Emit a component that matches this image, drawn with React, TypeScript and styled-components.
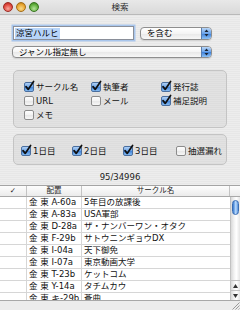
import React from 'react';
import styled, { createGlobalStyle } from 'styled-components';

const FONT = `"DejaVu Sans", "Noto Sans CJK JP", sans-serif`;

const GlobalStyle = createGlobalStyle`
  html, body { margin: 0; padding: 0; }
  body { width: 240px; height: 310px; overflow: hidden; background: #e9e9e9; }
  * { box-sizing: border-box; }
`;

const Window = styled.div`
  width: 240px;
  height: 310px;
  display: flex;
  flex-direction: column;
  background: repeating-linear-gradient(180deg, #ededed 0px, #ededed 1px, #e7e7e7 1px, #e7e7e7 2px);
  font-family: ${FONT};
  color: #000;
  overflow: hidden;
`;

const TitleBar = styled.div`
  flex: none;
  height: 15px;
  display: grid;
  grid-template-columns: 1fr auto 1fr;
  align-items: center;
  background: linear-gradient(#e8e8e8, #d9d9d9);
  border-bottom: 1px solid #b9b9b9;
`;

const Lights = styled.div`
  display: flex;
  gap: 3px;
  padding-left: 3px;
`;

const Light = styled.span<{ $c: string; $d: string; $h: string }>`
  width: 10px;
  height: 10px;
  border-radius: 50%;
  border: 1px solid ${(p) => p.$d};
  background: radial-gradient(circle at 50% 70%, ${(p) => p.$h} 0%, ${(p) => p.$c} 60%, ${(p) => p.$d} 100%);
`;

const Title = styled.div`
  font-size: 8.5px;
  color: #2a2a2a;
  line-height: 14px;
`;

const Form = styled.div`
  flex: none;
  padding: 10px 0 0 12px;
  display: flex;
  flex-direction: column;
  gap: 5px;
`;

const FieldRow = styled.div`
  display: flex;
  align-items: center;
  gap: 5px;
  height: 16px;
`;

const TextField = styled.div`
  width: 121px;
  height: 14px;
  margin: 1px;
  border: 1px solid #8a8f99;
  background: #fff;
  box-shadow: 0 0 0 1.5px #a9c6ec;
  display: flex;
  align-items: center;
  padding-left: 1px;
`;

const Selection = styled.span`
  background: #b7d4f8;
  font-size: 8.5px;
  line-height: 11px;
  padding: 0 1px;
`;

const Popup = styled.div<{ $w: number; $h: number }>`
  width: ${(p) => p.$w}px;
  height: ${(p) => p.$h}px;
  display: flex;
  border: 1px solid #8e8e8e;
  border-radius: 4px;
  overflow: hidden;
  background: linear-gradient(#ffffff, #f4f4f4 50%, #e8e8e8 51%, #f7f7f7);
  box-shadow: 0 1px 1px rgba(0, 0, 0, 0.12);
`;

const PopupLabel = styled.span`
  flex: 1;
  padding-left: 6px;
  font-size: 8.5px;
  line-height: 11px;
  white-space: nowrap;
`;

const Stepper = styled.span`
  width: 10px;
  display: flex;
  align-items: center;
  justify-content: center;
  border-left: 1px solid #5a7eae;
  background: linear-gradient(#b8d6f8, #6aa3ea 50%, #3d7fd8 51%, #8cc2f7);
`;

const GroupBox = styled.div<{ $cols: string; $h: number; $pad: string; $mt: number }>`
  flex: none;
  margin: ${(p) => p.$mt}px 0 0 13px;
  width: 214px;
  height: ${(p) => p.$h}px;
  border: 1px solid #c4c4c4;
  border-radius: 5px;
  background: rgba(0, 0, 0, 0.045);
  display: grid;
  grid-template-columns: ${(p) => p.$cols};
  grid-auto-rows: 14px;
  padding: ${(p) => p.$pad};
`;

const CheckItem = styled.label`
  display: flex;
  align-items: center;
  gap: 2px;
  font-size: 8.5px;
  line-height: 14px;
  white-space: nowrap;
  color: #111;
`;

const Count = styled.div`
  flex: none;
  height: 20px;
  padding-top: 3px;
  display: flex;
  justify-content: center;
  align-items: center;
  font-size: 8.5px;
  color: #222;
`;

const Table = styled.div`
  flex: none;
  height: 115px;
  display: flex;
  flex-direction: column;
  background: #fff;
  border-top: 1px solid #a4a4a4;
`;

const HeaderRow = styled.div`
  flex: none;
  height: 11px;
  display: grid;
  grid-template-columns: 27px 55px 148px 10px;
  background: linear-gradient(#fdfdfd, #ebebeb);
  border-bottom: 1px solid #a9a9a9;
`;

const HeaderCell = styled.div<{ $last?: boolean }>`
  border-right: ${(p) => (p.$last ? 'none' : '1px solid #c3c3c3')};
  font-size: 7.5px;
  line-height: 10px;
  text-align: center;
  color: #222;
`;

const TableBody = styled.div`
  flex: 1;
  display: flex;
  overflow: hidden;
`;

const Rows = styled.div`
  flex: 1;
  overflow: hidden;
`;

const DataRow = styled.div`
  height: 12px;
  display: grid;
  grid-template-columns: 27px 55px 1fr;
  border-bottom: 1px solid #d6d6d6;
`;

const Cell = styled.div<{ $border?: boolean }>`
  border-right: ${(p) => (p.$border ? '1px solid #d6d6d6' : 'none')};
  font-size: 8.5px;
  line-height: 11px;
  padding-left: 2px;
  white-space: nowrap;
  overflow: hidden;
  color: #111;
`;

const Scrollbar = styled.div`
  width: 10px;
  flex: none;
  display: flex;
  flex-direction: column;
  border-left: 1px solid #c2c2c2;
  background: linear-gradient(90deg, #d9d9d9, #f3f3f3 35%, #ffffff 60%, #e4e4e4);
`;

const Track = styled.div`
  flex: 1;
  padding-top: 3px;
  display: flex;
  justify-content: center;
  align-items: flex-start;
`;

const Thumb = styled.div`
  width: 7px;
  height: 15px;
  border-radius: 4px;
  border: 1px solid #3b6db3;
  background: linear-gradient(90deg, #3b78cc, #8fbff3 40%, #c2ddfb 55%, #5592de);
`;

const ArrowBtn = styled.div`
  height: 10px;
  display: flex;
  align-items: center;
  justify-content: center;
  border-top: 1px solid #c2c2c2;
`;

const BottomBar = styled.div`
  flex: none;
  height: 10px;
  display: flex;
  justify-content: flex-end;
  align-items: flex-end;
  border-top: 1px solid #a8a8a8;
  background: #ececec;
`;

const StepperArrows = () => (
  <svg width="5" height="8" viewBox="0 0 5 8">
    <path d="M2.5 0.5 L4.5 3 L0.5 3 Z" fill="#1b2533" />
    <path d="M2.5 7.5 L4.5 5 L0.5 5 Z" fill="#1b2533" />
  </svg>
);

const Check = ({ checked }: { checked: boolean }) => (
  <svg width="10" height="10" viewBox="0 0 10 10" style={{ flex: 'none', overflow: 'visible' }}>
    <defs>
      <linearGradient id="cbOn" x1="0" y1="0" x2="0" y2="1">
        <stop offset="0" stopColor="#b6d5f7" />
        <stop offset="0.5" stopColor="#6ea6ea" />
        <stop offset="0.51" stopColor="#3f82da" />
        <stop offset="1" stopColor="#8ec3f6" />
      </linearGradient>
      <linearGradient id="cbOff" x1="0" y1="0" x2="0" y2="1">
        <stop offset="0" stopColor="#ffffff" />
        <stop offset="0.5" stopColor="#f2f2f2" />
        <stop offset="0.51" stopColor="#e6e6e6" />
        <stop offset="1" stopColor="#fafafa" />
      </linearGradient>
    </defs>
    <rect x="0.5" y="0.5" width="9" height="9" rx="1.5" fill={checked ? 'url(#cbOn)' : 'url(#cbOff)'} stroke={checked ? '#4b6f9f' : '#8c8c8c'} />
    {checked && <path d="M2 4.6 L4.2 7.4 L9.6 -0.6" fill="none" stroke="#101010" strokeWidth="1.7" strokeLinecap="round" strokeLinejoin="round" />}
  </svg>
);

const CheckBox = ({ label, checked }: { label: string; checked: boolean }) => (
  <CheckItem>
    <Check checked={checked} />
    <span>{label}</span>
  </CheckItem>
);

const rows: [string, string][] = [
  ['金 東 A-60a', '5年目の放課後'],
  ['金 東 A-83a', 'USA軍部'],
  ['金 東 D-28a', 'ザ・ナンバーワン・オタク'],
  ['金 東 F-29b', 'サトウニンギョウDX'],
  ['金 東 I-04a', '天下御免'],
  ['金 東 I-07a', '東京動画大学'],
  ['金 東 T-23b', 'ケットコム'],
  ['金 東 Y-14a', 'タチムカウ'],
  ['金 東 キ-29b', '蒼曲'],
];

export default function App() {
  return (
    <>
      <GlobalStyle />
      <Window>
        <TitleBar>
          <Lights>
            <Light $c="#e0463c" $d="#9c2a22" $h="#f7a79c" />
            <Light $c="#e8a530" $d="#a56d16" $h="#f8d98a" />
            <Light $c="#5fae3b" $d="#37741f" $h="#b4e39a" />
          </Lights>
          <Title>検索</Title>
          <span />
        </TitleBar>

        <Form>
          <FieldRow>
            <TextField>
              <Selection>涼宮ハルヒ</Selection>
            </TextField>
            <Popup $w={72} $h={13}>
              <PopupLabel>を含む</PopupLabel>
              <Stepper><StepperArrows /></Stepper>
            </Popup>
          </FieldRow>
          <Popup $w={200} $h={12}>
            <PopupLabel>ジャンル指定無し</PopupLabel>
            <Stepper><StepperArrows /></Stepper>
          </Popup>
        </Form>

        <GroupBox $cols="67px 70px 1fr" $h={58} $pad="9px 0 5px 10px" $mt={12}>
          <CheckBox label="サークル名" checked />
          <CheckBox label="執筆者" checked />
          <CheckBox label="発行誌" checked />
          <CheckBox label="URL" checked={false} />
          <CheckBox label="メール" checked={false} />
          <CheckBox label="補足説明" checked />
          <CheckBox label="メモ" checked={false} />
        </GroupBox>

        <GroupBox $cols="51px 51px 53px 1fr" $h={31} $pad="9px 0 6px 7px" $mt={6}>
          <CheckBox label="1日目" checked />
          <CheckBox label="2日目" checked />
          <CheckBox label="3日目" checked />
          <CheckBox label="抽選漏れ" checked={false} />
        </GroupBox>

        <Count>95/34996</Count>

        <Table>
          <HeaderRow>
            <HeaderCell>✓</HeaderCell>
            <HeaderCell>配置</HeaderCell>
            <HeaderCell>サークル名</HeaderCell>
            <HeaderCell $last />
          </HeaderRow>
          <TableBody>
            <Rows>
              {rows.map(([place, name]) => (
                <DataRow key={place}>
                  <Cell $border />
                  <Cell $border>{place}</Cell>
                  <Cell>{name}</Cell>
                </DataRow>
              ))}
            </Rows>
            <Scrollbar>
              <Track>
                <Thumb />
              </Track>
              <ArrowBtn>
                <svg width="5" height="4" viewBox="0 0 5 4"><path d="M2.5 0 L5 4 L0 4 Z" fill="#333" /></svg>
              </ArrowBtn>
              <ArrowBtn>
                <svg width="5" height="4" viewBox="0 0 5 4"><path d="M2.5 4 L5 0 L0 0 Z" fill="#333" /></svg>
              </ArrowBtn>
            </Scrollbar>
          </TableBody>
        </Table>

        <BottomBar>
          <svg width="9" height="9" viewBox="0 0 9 9">
            <path d="M8.5 1.5 L1.5 8.5 M8.5 4.5 L4.5 8.5 M8.5 7.5 L7.5 8.5" stroke="#9a9a9a" strokeWidth="1" />
          </svg>
        </BottomBar>
      </Window>
    </>
  );
}
